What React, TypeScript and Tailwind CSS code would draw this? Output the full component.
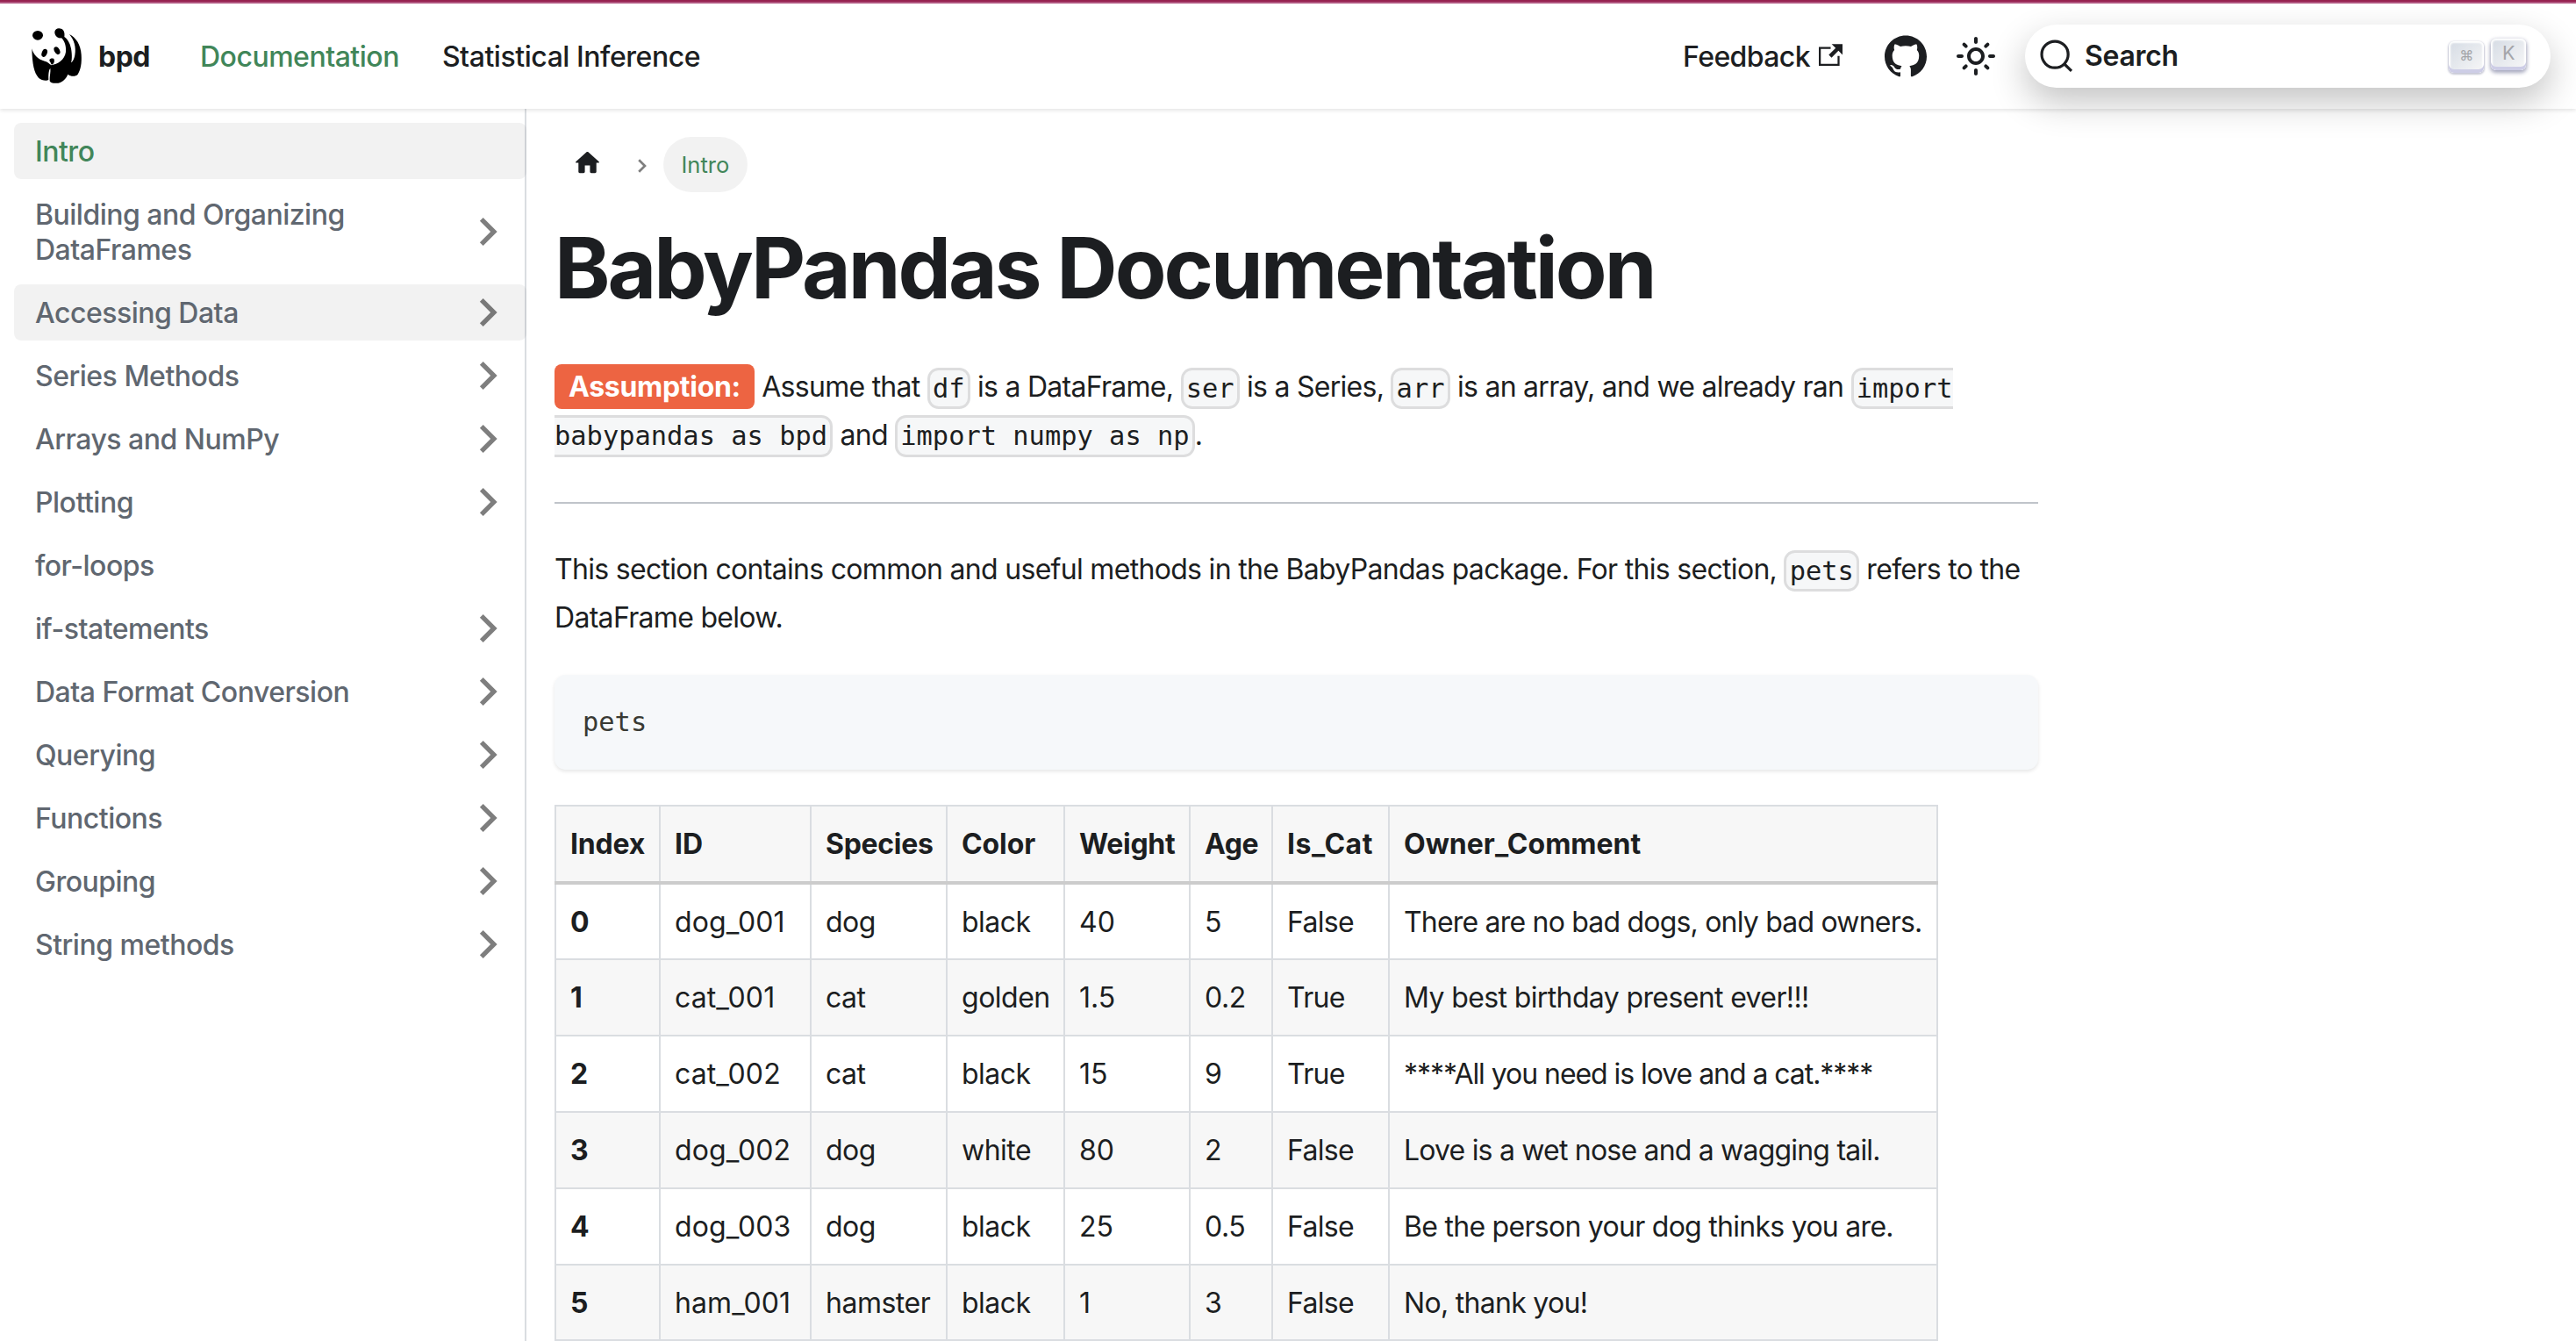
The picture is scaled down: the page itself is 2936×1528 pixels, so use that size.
import React from "react";

const menu: { label: string; arrow: boolean; state?: "active" | "hover" }[] = [
  { label: "Intro", arrow: false, state: "active" },
  { label: "Building and Organizing DataFrames", arrow: true },
  { label: "Accessing Data", arrow: true, state: "hover" },
  { label: "Series Methods", arrow: true },
  { label: "Arrays and NumPy", arrow: true },
  { label: "Plotting", arrow: true },
  { label: "for-loops", arrow: false },
  { label: "if-statements", arrow: true },
  { label: "Data Format Conversion", arrow: true },
  { label: "Querying", arrow: true },
  { label: "Functions", arrow: true },
  { label: "Grouping", arrow: true },
  { label: "String methods", arrow: true },
];

const columns = [
  { name: "Index", width: "w-[119px]", head: "tracking-[-0.2px]", tracking: "" },
  { name: "ID", width: "w-[172px]", head: "", tracking: "tracking-[0.1px]" },
  { name: "Species", width: "w-[155px]", head: "tracking-[-0.3px]", tracking: "tracking-[-0.5px]" },
  { name: "Color", width: "w-[134px]", head: "tracking-[-0.1px]", tracking: "tracking-[-0.5px]" },
  { name: "Weight", width: "w-[143px]", head: "tracking-[-0.3px]", tracking: "" },
  { name: "Age", width: "w-[94px]", head: "tracking-[-0.4px]", tracking: "tracking-[-0.4px]" },
  { name: "Is_Cat", width: "w-[133px]", head: "tracking-[0.5px]", tracking: "tracking-[-0.7px]" },
  { name: "Owner_Comment", width: "w-[625px]", head: "", tracking: "" },
];

const rows = [
  { cells: ["0", "dog_001", "dog", "black", "40", "5", "False"], comment: "There are no bad dogs, only bad owners.", tracking: "tracking-[-0.8px]" },
  { cells: ["1", "cat_001", "cat", "golden", "1.5", "0.2", "True"], comment: "My best birthday present ever!!!", tracking: "tracking-[-0.62px]" },
  { cells: ["2", "cat_002", "cat", "black", "15", "9", "True"], comment: "****All you need is love and a cat.****", tracking: "tracking-[-1.05px]" },
  { cells: ["3", "dog_002", "dog", "white", "80", "2", "False"], comment: "Love is a wet nose and a wagging tail.", tracking: "tracking-[-0.8px]" },
  { cells: ["4", "dog_003", "dog", "black", "25", "0.5", "False"], comment: "Be the person your dog thinks you are.", tracking: "tracking-[-0.72px]" },
  { cells: ["5", "ham_001", "hamster", "black", "1", "3", "False"], comment: "No, thank you!", tracking: "tracking-[-0.7px]" },
];

function Panda() {
  return (
    <svg viewBox="0 0 270 270" className="-mt-2.5 -mb-3 h-[90px] w-[90px] shrink-0">
      <ellipse cx="66" cy="61" rx="18" ry="16" />
      <path d="M124 48C126 38 136 34 146 38C156 42 159 52 157 66C168 74 177 88 180 106C184 128 183 148 180 154C184 152 190 144 193 128C198 100 190 76 174 57C196 68 213 92 215 126C217 156 213 178 203 194C196 202 180 203 169 194C164 208 150 222 136 224C122 226 108 223 107 216C106 200 111 186 109 173C105 177 102 190 103 212C96 218 78 214 69 206C54 190 47 160 46 106C51 128 68 144 90 149C100 151 106 159 113 163C134 159 158 146 162 118C164 98 158 80 147 70C132 72 123 60 124 48Z" />
      <ellipse cx="89" cy="121" rx="9" ry="14" transform="rotate(22 89 121)" />
      <ellipse cx="132" cy="113" rx="9" ry="14" transform="rotate(-28 132 113)" />
      <path d="M106 145C108 139 120 138 122 143C124 149 122 158 114 161C110 158 111 152 107 150Z" />
    </svg>
  );
}

function Chevron() {
  return (
    <svg viewBox="0 0 24 24" className="h-16 w-16 shrink-0 rotate-90 opacity-50">
      <path d="M7.41 15.41L12 10.83l4.59 4.58L18 14l-6-6-6 6z" />
    </svg>
  );
}

function Code({ children }: { children: React.ReactNode }) {
  return (
    <code className="rounded-[12.8px] border-[3.2px] border-black/10 bg-[#f6f7f8] p-[3.2px] align-middle font-['DejaVu_Sans_Mono',monospace] text-[30.4px] tracking-normal">
      {children}
    </code>
  );
}

export default function App() {
  return (
    <div className="h-[1528px] w-[2936px] overflow-hidden bg-white font-['Inter',sans-serif] text-[32px] leading-[52.8px] text-[#1c1e21]">
      <div className="h-0.5 bg-[#96224f]" />
      <div className="h-0.5 bg-[#b25680]" />
      <nav className="relative z-10 flex h-[120px] items-center bg-white pr-[29px] pl-[21px] font-medium tracking-[-0.5px] shadow-[0_2px_4px_0_rgba(0,0,0,0.1)]">
        <Panda />
        <b className="mt-0.5 ml-px font-bold">bpd</b>
        <span className="mt-0.5 ml-[57px] text-[#418659]">Documentation</span>
        <span className="mt-0.5 ml-[49px] tracking-[-0.45px]">Statistical Inference</span>
        <div className="ml-auto flex items-center">
          <span className="mt-0.5 tracking-[-0.6px]">Feedback</span>
          <svg viewBox="0 0 24 24" className="mb-[3px] ml-[10px] h-[27px] w-[27px]" fill="currentColor">
            <path d="M21 13v10h-21v-19h12v2h-10v15h17v-8h2zm3-12h-10.988l4.035 4-6.977 7.07 2.828 2.828 6.977-7.07 4.125 4.172v-11z" />
          </svg>
          <svg viewBox="0 0 24 24" className="ml-[48px] h-12 w-12" fill="currentColor">
            <path d="M12 .297c-6.63 0-12 5.373-12 12 0 5.303 3.438 9.8 8.205 11.385.6.113.82-.258.82-.577 0-.285-.01-1.04-.015-2.04-3.338.724-4.042-1.61-4.042-1.61C4.422 18.07 3.633 17.7 3.633 17.7c-1.087-.744.084-.729.084-.729 1.205.084 1.838 1.236 1.838 1.236 1.07 1.835 2.809 1.305 3.495.998.108-.776.417-1.305.76-1.605-2.665-.3-5.466-1.332-5.466-5.93 0-1.31.465-2.38 1.235-3.22-.135-.303-.54-1.523.105-3.176 0 0 1.005-.322 3.3 1.23.96-.267 1.98-.399 3-.405 1.02.006 2.04.138 3 .405 2.28-1.552 3.285-1.23 3.285-1.23.645 1.653.24 2.873.12 3.176.765.84 1.23 1.91 1.23 3.22 0 4.61-2.805 5.625-5.475 5.92.42.36.81 1.096.81 2.22 0 1.606-.015 2.896-.015 3.286 0 .315.21.69.825.57C20.565 22.092 24 17.592 24 12.297c0-6.627-5.373-12-12-12" />
          </svg>
          <svg viewBox="0 0 24 24" className="ml-[32px] h-12 w-12" fill="currentColor">
            <path d="M12,9c1.65,0,3,1.35,3,3s-1.35,3-3,3s-3-1.35-3-3S10.35,9,12,9 M12,7c-2.76,0-5,2.24-5,5s2.24,5,5,5s5-2.24,5-5 S14.76,7,12,7L12,7z M2,13l2,0c0.55,0,1-0.45,1-1s-0.45-1-1-1l-2,0c-0.55,0-1,0.45-1,1S1.45,13,2,13z M20,13l2,0c0.55,0,1-0.45,1-1 s-0.45-1-1-1l-2,0c-0.55,0-1,0.45-1,1S19.45,13,20,13z M11,2v2c0,0.55,0.45,1,1,1s1-0.45,1-1V2c0-0.55-0.45-1-1-1S11,1.45,11,2z M11,20v2c0,0.55,0.45,1,1,1s1-0.45,1-1v-2c0-0.55-0.45-1-1-1C11.45,19,11,19.45,11,20z M5.99,4.58c-0.39-0.39-1.03-0.39-1.41,0 c-0.39,0.39-0.39,1.03,0,1.41l1.06,1.06c0.39,0.39,1.03,0.39,1.41,0s0.39-1.03,0-1.41L5.99,4.58z M18.36,16.95 c-0.39-0.39-1.03-0.39-1.41,0c-0.39,0.39-0.39,1.03,0,1.41l1.06,1.06c0.39,0.39,1.03,0.39,1.41,0c0.39-0.39,0.39-1.03,0-1.41 L18.36,16.95z M19.42,5.99c0.39-0.39,0.39-1.03,0-1.41c-0.39-0.39-1.03-0.39-1.41,0l-1.06,1.06c-0.39,0.39-0.39,1.03,0,1.41 s1.03,0.39,1.41,0L19.42,5.99z M7.05,18.36c0.39-0.39,0.39-1.03,0-1.41c-0.39-0.39-1.03-0.39-1.41,0l-1.06,1.06 c-0.39,0.39-0.39,1.03,0,1.41s1.03,0.39,1.41,0L7.05,18.36z" />
          </svg>
          <div className="ml-[32px] flex h-[72px] w-[599px] items-center rounded-full bg-white pr-[28px] pl-4 shadow-[0_16px_40px_0_rgba(0,0,0,0.24)]">
            <svg viewBox="0 0 20 20" className="h-10 w-10" fill="none" stroke="currentColor" strokeWidth="1.6">
              <path d="M14.386 14.386l4.0877 4.0877-4.0877-4.0877c-2.9418 2.9419-7.7115 2.9419-10.6533 0-2.9419-2.9418-2.9419-7.7115 0-10.6533 2.9418-2.9419 7.7115-2.9419 10.6533 0 2.9419 2.9418 2.9419 7.7115 0 10.6533z" />
            </svg>
            <b className="ml-[12px] font-semibold tracking-[-0.3px]">Search</b>
            <kbd className="mt-0.5 ml-auto flex h-9 w-10 items-center justify-center rounded-md bg-linear-to-br from-[#d5dbe4] to-[#f8f8f8] pb-1 font-['Inter',sans-serif] text-[16px] font-normal text-[#a4a5a9] shadow-[inset_0_-4px_0_0_#cdcde6,inset_0_0_2px_2px_#fff,0_1px_2px_1px_rgba(30,35,90,0.25)]">⌘</kbd>
            <kbd className="mb-1 ml-2 flex h-9 w-10 items-center justify-center rounded-md bg-linear-to-br from-[#d5dbe4] to-[#f8f8f8] pb-1 font-['Inter',sans-serif] text-[21.6px] font-normal text-[#a4a5a9] shadow-[inset_0_-4px_0_0_#cdcde6,inset_0_0_2px_2px_#fff,0_2px_4px_1px_rgba(30,35,90,0.4)]">K</kbd>
          </div>
        </div>
      </nav>
      <div className="flex h-[1404px]">
        <aside className="w-[600px] shrink-0 border-r-2 border-[#dadde1] pt-4 pl-4 font-medium tracking-[-0.5px]">
          <ul className="-mr-0.5 flex flex-col gap-2">
            {menu.map((m) => (
              <li
                key={m.label}
                className={
                  "flex min-h-16 items-center rounded-lg pr-3 pl-6 leading-10 " +
                  (m.state ? "bg-black/5 " : "") +
                  (m.state === "active" ? "text-[#418659]" : "text-[#606770]")
                }
              >
                <span className="w-[420px] shrink-0 pt-[13px] pb-[11px]">{m.label}</span>
                {m.arrow && (
                  <span className="-my-4 ml-auto text-black">
                    <Chevron />
                  </span>
                )}
              </li>
            ))}
          </ul>
        </aside>
        <main className="w-[1723px] shrink-0 pt-8 pl-8">
          <div className="flex h-[63px] items-center text-[25.6px]">
            <svg viewBox="0 0 24 24" className="-mt-1 ml-5 h-[35px] w-[35px]" fill="currentColor">
              <path d="M10 19v-5h4v5c0 .55.45 1 1 1h3c.55 0 1-.45 1-1v-7h1.7c.46 0 .68-.57.33-.87L12.67 3.6c-.38-.34-.96-.34-1.34 0l-8.36 7.53c-.34.3-.13.87.33.87H5v7c0 .55.45 1 1 1h3c.55 0 1-.45 1-1z" />
            </svg>
            <svg viewBox="0 0 10 16" className="mt-[3px] ml-[40px] h-4 w-[10px] opacity-50" fill="none" stroke="black" strokeWidth="2.7">
              <path d="M1.2 1.2L8 8L1.2 14.8" />
            </svg>
            <span className="ml-[19px] flex h-[63px] items-center rounded-full bg-black/5 px-[20.5px] pt-0.5 text-[#418659]">Intro</span>
          </div>
          <h1 className="mt-[26px] text-[96px] leading-[120px] font-bold tracking-[-3px]">BabyPandas Documentation</h1>
          <p className="mt-[50px] tracking-[-0.73px]">
            <span className="rounded-lg bg-[#ed6442] px-4 py-1.5 font-bold tracking-[-0.3px] text-white">Assumption:</span> Assume that <Code>df</Code> is a DataFrame, <Code>ser</Code> is a Series, <Code>arr</Code> is an array, and we already ran <Code>import babypandas as bpd</Code> and <Code>import numpy as np</Code>.
          </p>
          <hr className="mt-12 h-0.5 border-0 bg-[#c0c4ca]" />
          <p className="mt-[49px] tracking-[-0.69px]">
            This section contains common and useful methods in the BabyPandas package. For this section, <Code>pets</Code> refers to the DataFrame below.
          </p>
          <pre className="mt-[38px] rounded-[12.8px] bg-[#f6f8fa] p-8 font-['DejaVu_Sans_Mono',monospace] text-[30.4px] leading-[44px] text-[#393a34] shadow-[0_2px_4px_0_rgba(0,0,0,0.1)]">pets</pre>
          <table className="mt-10 w-[1575px] table-fixed border-collapse">
            <thead>
              <tr className="border-b-4 border-[#ccc] bg-[#f7f7f7]">
                {columns.map((c) => (
                  <th key={c.name} className={"border-x-2 border-t-2 border-x-[#dadde1] border-t-[#dadde1] px-4 pt-[17px] pb-[15px] text-left font-bold " + c.width + " " + c.head}>{c.name}</th>
                ))}
              </tr>
            </thead>
            <tbody>
              {rows.map((r) => (
                <tr key={r.comment} className="even:bg-[#f7f7f7]">
                  {r.cells.map((c, i) => (
                    <td key={i} className={"border-2 border-[#dadde1] px-4 pt-[17px] pb-[15px] " + (i === 0 ? "font-bold" : columns[i].tracking)}>{c}</td>
                  ))}
                  <td className={"border-2 border-[#dadde1] px-4 pt-[17px] pb-[15px] whitespace-nowrap " + r.tracking}>{r.comment}</td>
                </tr>
              ))}
            </tbody>
          </table>
        </main>
      </div>
    </div>
  );
}
